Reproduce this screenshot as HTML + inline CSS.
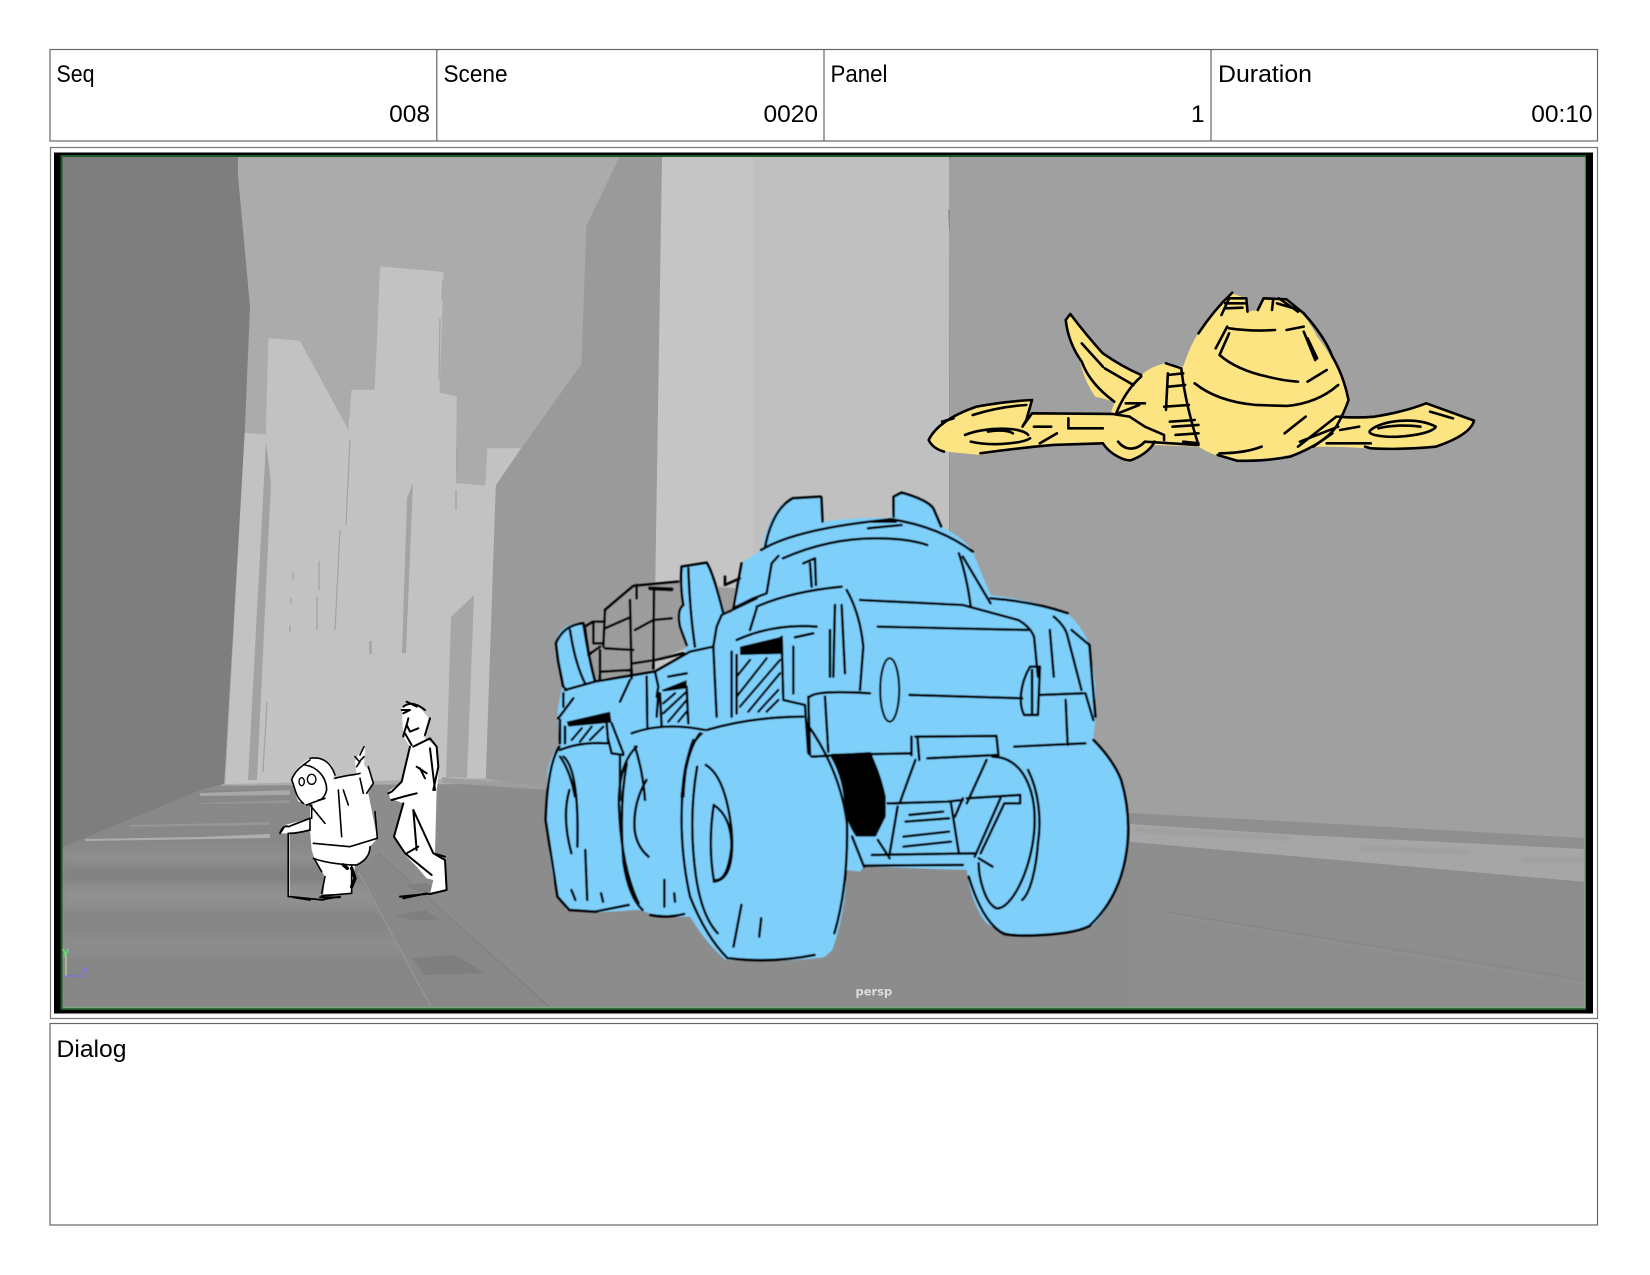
<!DOCTYPE html>
<html lang="en"><head><meta charset="utf-8"><title>Storyboard panel</title>
<style>
html,body{margin:0;padding:0;background:#fff;width:1650px;height:1275px;overflow:hidden}
svg{display:block;position:absolute;left:0;top:0}
.l{font-family:"Liberation Sans","Noto Sans CJK JP",sans-serif;font-size:24.5px;fill:#000}
.ink path{fill:none;stroke:#000;stroke-linecap:round;stroke-linejoin:round;vector-effect:non-scaling-stroke}
.th path{stroke-width:2.6}
</style></head><body>
<svg width="1650" height="1275" viewBox="0 0 1650 1275" xmlns="http://www.w3.org/2000/svg">
<defs>
<filter id="b2" x="-20%" y="-20%" width="140%" height="140%"><feGaussianBlur stdDeviation="2"/></filter>
<filter id="b5" x="-20%" y="-80%" width="140%" height="260%"><feGaussianBlur stdDeviation="5"/></filter>
<filter id="s" x="-5%" y="-5%" width="110%" height="110%"><feGaussianBlur stdDeviation="0.4"/></filter>
<clipPath id="c"><rect x="62.5" y="157" width="1522" height="850"/></clipPath>
</defs>

<!-- header table -->
<rect x="50" y="49.5" width="1547.5" height="91.5" fill="#fff" stroke="#666" stroke-width="1.2"/>
<path d="M436.8 49.5V141M824 49.5V141M1211 49.5V141" stroke="#666" stroke-width="1.2" fill="none"/>
<text class="l" x="56.5" y="82" textLength="38" lengthAdjust="spacingAndGlyphs">Seq</text>
<text class="l" x="443.5" y="82" textLength="64" lengthAdjust="spacingAndGlyphs">Scene</text>
<text class="l" x="830.5" y="82" textLength="57" lengthAdjust="spacingAndGlyphs">Panel</text>
<text class="l" x="1218" y="82" textLength="94" lengthAdjust="spacingAndGlyphs">Duration</text>
<text class="l" x="430" y="122" text-anchor="end">008</text>
<text class="l" x="818" y="122" text-anchor="end">0020</text>
<text class="l" x="1204.5" y="122" text-anchor="end">1</text>
<text class="l" x="1592.5" y="122" text-anchor="end">00:10</text>

<!-- panel frame -->
<rect x="50.5" y="147.5" width="1547" height="871" fill="#fff" stroke="#777" stroke-width="1.2"/>
<rect x="54" y="152.5" width="1539" height="861" fill="#000"/>
<rect x="60.5" y="155" width="1525.5" height="855" fill="#1f5a25"/>

<g clip-path="url(#c)">
<rect x="62" y="157" width="1523" height="850" fill="#8c8c8c"/>
<!-- left-floor tones and sidewalk -->
<polygon points="62,845 200,790 360,790 360,873 430,1007 62,1007" fill="#888"/>
<g filter="url(#b5)">
<rect x="62" y="852" width="300" height="12" fill="#8f8f8f"/>
<rect x="62" y="868" width="320" height="14" fill="#808080"/>
<rect x="62" y="885" width="340" height="22" fill="#919191"/>
<rect x="62" y="912" width="350" height="20" fill="#858585"/>
<rect x="62" y="935" width="370" height="18" fill="#8d8d8d"/>
<rect x="62" y="958" width="400" height="50" fill="#868686"/>
</g>
<polygon points="357,873 377,853 550,1007 430,1007" fill="#888"/>
<polygon points="358,873 360,873 432,1007 430,1007" fill="#939393"/>
<polygon points="405,885 425,883 445,892 418,892" fill="#808080"/>
<polygon points="395,915 425,910 440,920 410,920" fill="#7f7f7f"/>
<polygon points="412,958 455,955 485,973 425,975" fill="#7e7e7e"/>
<polygon points="377,853 379,853 551,1007 548,1007" fill="#828282"/>
<polygon points="85,839 200,837 270,834 270,838 85,841" fill="#aeaeae"/>
<polygon points="130,825 270,822 270,825 130,827" fill="#969696"/>
<polygon points="200,793 290,790 290,795 200,796" fill="#a8a8a8"/>
<polygon points="225,780 247,780 247,784 225,784" fill="#a3a3a3"/>
<polygon points="200,803 290,800 290,803 200,804" fill="#959595"/>

<g transform="translate(0 140) scale(.5263 .574)">
<!-- back wall -->
<polygon points="450,30 1190,30 1190,1120 420,1125" fill="#ababab"/>
<!-- left wall -->
<polygon points="110,20 452,20 452,60 475,290 465,510 426,1122 382,1132 118,1232" fill="#7e7e7e"/>
<!-- building on the right of the alley -->
<polygon points="1182,20 1262,20 1250,1130 1020,1130 920,1112 942,600 1105,390 1114,150" fill="#9a9a9a"/>
<!-- light towers -->
<polygon points="510,345 570,350 662,505 668,435 712,435 722,220 843,230 835,440 868,447 866,598 922,602 926,537 990,537 942,602 923,1112 428,1122 465,510 505,513" fill="#c2c2c2"/>
<polygon points="840,1110 1040,1125 1040,1132 840,1120" fill="#9e9e9e"/>
</g>
<polygon points="266,442 271,483 257,780 248,780" fill="#a2a2a2"/>
<polygon points="451,617 474,595 467,778 446,777" fill="#a6a6a6"/>
<polygon points="407,498 413,483 406,653 402,653" fill="#a4a4a4"/>
<polygon points="369,641 372,641 372,654 369,654" fill="#a8a8a8"/>
<path d="M319 561V590M317 597V630M293 572V580M291 598V604M290 625V632M340 530L335 630M350 440L346 525M267 702L263 772M441 150V150M443 280L442 300M440 318L439 380M457 447V470M456 490V510" stroke="#a2a2a2" stroke-width="1.2" fill="none"/>

<!-- big light building + right wall -->
<polygon points="662,157 949,157 949,740 655,740 655,600" fill="#c5c5c5"/>
<rect x="753" y="157" width="196" height="420" fill="#c0c0c0"/>
<polygon points="949,160 953,157 1590,157 1590,845 1130,830 950,820" fill="#a0a0a0"/>
<polygon points="948,210 950,210 950,230 949,230" fill="#8e8e8e"/>
<polygon points="1130,813 1585,838 1585,882 1130,842" fill="#a6a6a6"/>
<polygon points="1130,813 1300,822 1585,838 1585,849 1300,835 1130,824" fill="#8f8f8f"/>
<path d="M1135 830L1290 838M1360 848L1470 852M1520 860L1585 860" stroke="#8e8e8e" stroke-width="1.5" fill="none" filter="url(#b2)"/>
<polygon points="1130,842 1585,882 1585,1010 1130,1010" fill="#8d8d8d"/>
<path d="M1165,912L1585,980" stroke="#868686" stroke-width="1.2" fill="none"/>
<path d="M1165,914L1585,984" stroke="#939393" stroke-width="1" fill="none"/>
</g>
<path d="M62.5 1007.5H1584.7V157" fill="none" stroke="#7fa582" stroke-width="1.6"/>
<!-- axis -->
<path d="M66 955V976" stroke="#b7d6a8" stroke-width="1.2" fill="none"/>
<path d="M66 976H84" stroke="#7b74d8" stroke-width="1.4" fill="none"/>
<text x="62" y="955" font-family="'DejaVu Sans',sans-serif" font-size="11" font-weight="bold" fill="#6fd86f">y</text>
<text x="82" y="973" font-family="'DejaVu Sans',sans-serif" font-size="10" font-weight="bold" fill="#7f78e0">z</text>
<text x="855.5" y="995.5" font-family="'DejaVu Sans',sans-serif" font-size="11.5" font-weight="bold" fill="#dcdcdc">persp</text>

<!-- TRUCK -->
<g filter="url(#s)">
<g transform="translate(520 470) scale(.3954 .3333)">
<path fill="#7fcffb" d="M90 520Q95 470 145 458Q165 500 190 632L330 610L425 562Q395 500 405 430L410 290L470 278Q500 340 520 430L545 410L560 280L610 240Q625 150 665 100Q700 75 760 78L765 155Q850 140 940 145L945 75L965 65Q1030 90 1045 115L1065 170Q1130 210 1145 245L1190 375Q1300 390 1385 430Q1430 480 1440 530L1455 640V750L1450 810Q1500 870 1520 930Q1550 1050 1530 1170Q1510 1290 1450 1365Q1400 1395 1300 1398Q1230 1400 1180 1360Q1140 1300 1130 1200L870 1190L860 1205L825 1200Q825 1320 790 1440L770 1462Q650 1480 520 1470Q470 1420 430 1340L360 1342L300 1320L190 1328L120 1320Q90 1280 80 1200Q60 1050 70 900Q80 850 100 830L95 720L105 660L115 620Z"/>
<path d="M785 860L890 855Q915 920 925 980L925 1040L900 1100L850 1100Q825 1060 820 1000Q815 920 785 860Z" fill="#000"/>
<g class="ink th">
<!-- top / cab -->
<path d="M620 230C630 170 650 110 690 85L760 80M762 82L765 155M610 240Q700 175 940 148Q1060 170 1145 245M945 140L945 80L965 68Q1030 90 1045 115L1065 170M665 265Q780 205 900 205Q980 205 1030 225M880 175L965 165M890 155L950 155M1110 250Q1130 320 1140 410M1120 260Q1160 340 1190 400"/>
<!-- grille and front -->
<path d="M860 390L1120 405L1260 450Q1290 470 1300 500L1310 620M1190 385Q1300 395 1385 430M905 470L1285 480M1350 440Q1380 470 1385 500L1420 660M1395 480L1440 525L1455 740M1340 480L1350 620"/>
<path d="M985 675L1270 685M1315 675L1425 670M990 850L790 855M1380 690L1385 825M1430 670L1450 750M1000 800L1205 798L1210 855L1030 865M1005 800L1010 870M1250 830L1430 820M990 800V855"/>
<ellipse cx="935" cy="660" rx="24" ry="95" fill="none" stroke="#000" style="stroke-width:2.2;vector-effect:non-scaling-stroke"/>
<path d="M1290 590C1265 640 1260 700 1275 735L1310 735L1315 590ZM1295 600V730"/>
<!-- front wheel -->
<path d="M725 760Q810 900 827 1060Q830 1250 795 1390M460 790Q420 830 412 950Q400 1120 430 1280Q470 1400 525 1465M530 1465Q640 1480 745 1455M448 890Q425 1050 445 1220Q460 1340 500 1390M470 885Q520 920 535 1080Q545 1230 490 1235M490 1005Q535 1040 535 1130Q525 1240 490 1230Q475 1120 490 1005M560 1305L540 1430M610 1345L605 1400"/>
<!-- mid wheel -->
<path d="M295 830Q250 880 250 1000Q255 1190 300 1300M270 880Q250 1010 262 1180Q275 1280 310 1320M320 930Q285 1000 290 1080Q295 1130 325 1160M330 1335Q370 1345 415 1332M365 1230V1310M390 1270L392 1295"/>
<!-- rear wheel -->
<path d="M100 830Q70 880 65 1050L95 1280L125 1320L190 1325L275 1305M110 860Q150 900 145 1130M125 960Q105 1040 130 1150M165 1140L170 1290M130 1260L140 1290M205 1270L210 1295"/>
<!-- undercarriage -->
<path d="M1000 870L960 1000L930 1000M1180 870L1130 1000M840 1100L870 1190M905 1110L935 1165M890 1155L1150 1150M870 1187L1120 1185M940 1000L1080 995L1120 990M955 1010L935 1150M1090 1000L1110 1150M985 1035L1070 1025M975 1055L1085 1045M970 1100L1085 1085M970 1130L1090 1115M1120 985L1100 1040M1130 985L1265 975L1265 1000L1225 1000L1165 1150M1215 985L1150 1160M1160 1165L1195 1190"/>
<path d="M1450 810Q1500 870 1520 930Q1550 1050 1530 1170Q1510 1290 1440 1368Q1400 1392 1300 1396Q1250 1398 1225 1392Q1170 1360 1135 1220M1195 860C1270 860 1310 960 1300 1090C1290 1210 1240 1320 1205 1315C1175 1300 1160 1220 1160 1180M1285 900C1310 960 1320 1040 1310 1120M1310 1120C1305 1200 1290 1270 1270 1290"/>
</g>
</g>
<g transform="translate(540 530) scale(.3333)">
<path fill="#9d9d9d" d="M135 290L195 240L285 165L420 155L445 350L350 395L180 450Z"/>
<path fill="#9d9d9d" d="M530 170L590 175L575 250L550 250Z"/>
<path fill="#7fcffb" d="M48 340Q70 285 130 280Q145 380 165 455L75 480L55 390Z"/>
<path fill="#7fcffb" d="M425 110L500 98Q520 130 550 250L530 290L520 350L440 345L420 290Q410 240 430 225Q420 170 425 110Z"/>
<path fill="#7fcffb" d="M75 480L165 455L345 425L450 365L520 340L580 240L600 300L600 600L60 640L60 560Z"/>
<path d="M600 350L725 320V372L600 375ZM365 480L440 450V475L370 485ZM80 575L210 545L215 578L85 590Z" fill="#000"/>
<g class="ink th">
<path d="M195 240L280 168L415 155M290 165V205M195 240L190 350M270 210L275 445M342 175L340 415M195 295L270 262M285 300L340 270L395 265M195 355L280 360M280 400L345 390L430 370M180 360V450M135 290L160 275L190 275M160 275V340L190 340M145 375L180 350M185 425L270 420M135 290L145 370"/>
<path d="M330 175L395 178" style="stroke-width:4"/>
<path d="M48 340Q70 285 130 280Q145 380 165 455M90 300Q105 400 135 460M48 340L55 395L70 470L80 480M75 480L165 455L345 425L450 365L520 350M70 490V530M55 565L100 505M60 570V640"/>
<path d="M425 110L500 98Q520 130 550 250M425 110Q420 170 430 225Q410 240 420 290L440 345M445 115Q450 250 465 350M555 140V165L600 145"/>
<path d="M580 235L640 205L680 190L695 100L715 78M605 100L580 235M650 235L630 300M650 230Q750 185 905 170M790 100L825 85L828 165M810 100L815 170M590 330Q700 280 830 290M765 322L820 310M530 290L545 255L650 205M530 290L520 350L530 560M575 365V560"/>
<path d="M725 320L730 510L795 525L805 670M590 375L590 550M760 350V490M360 490L365 590M355 490L350 560M440 470L445 580M385 440L440 430M320 440L322 590M240 515L270 450M345 425L355 470L350 500"/>
<path d="M75 590V640M200 580L205 640M205 630L215 670L250 675M215 580L250 670M60 660Q120 635 200 640M275 610Q370 575 495 600M500 600Q640 560 790 560M810 500Q830 480 990 490M805 500L810 675M855 500L865 665M815 680L990 670"/>
<path d="M885 225L880 440M905 225L915 430M920 180Q960 250 970 350L960 480M870 300V440M480 610Q440 660 425 800M460 630Q435 690 430 800M285 650Q310 730 315 810M240 680V810M60 680Q90 720 105 800"/>
<path d="M590 440L630 390M590 500L680 385M600 530L720 390M625 545L720 430M655 545L715 480M680 545L715 510M370 520L405 490M370 550L440 485M385 575L440 510M415 575L440 545M95 630L125 595M120 635L155 590M150 630L190 590" style="stroke-width:2.4"/>
</g>
</g>
</g>

<!-- SPACESHIP -->
<g transform="translate(900 270) scale(.3827 .3333)" filter="url(#s)">
<path fill="#fde482" d="M780 190Q820 120 862 68L905 85L910 125L935 120L948 85L1010 88Q1060 130 1090 200Q1150 290 1172 385Q1165 420 1145 440Q1190 445 1240 440Q1320 425 1380 400Q1450 425 1500 455Q1490 495 1400 530Q1300 540 1220 535Q1150 530 1090 530Q1000 570 880 572Q820 560 780 530L665 525Q640 560 595 575Q555 560 530 520L400 525Q300 540 210 555L120 545Q70 525 75 500Q100 450 200 410Q270 395 348 388L332 430L550 430L562 395L510 380Q480 330 470 270Q435 200 433 150L445 132Q490 200 530 250Q580 290 630 315Q655 290 690 280L740 290Q760 220 780 190Z"/>
<g class="ink th">
<path d="M780 190Q820 120 868 68M840 135L860 85L905 85L908 125M850 100L900 100M850 115L895 113M935 120L950 85L1010 88L1055 130M975 90L972 120M985 100L1030 115M990 85L1040 125"/>
<path d="M860 175Q920 185 980 180M1010 180L1055 170M855 170L825 235M860 190L835 255M1055 185L1085 270M1065 205L1090 265M835 255Q880 300 960 320Q1000 332 1040 335M1065 335L1115 300"/>
<path d="M1055 130Q1110 200 1130 260Q1160 320 1172 390Q1160 430 1140 470Q1110 520 1020 560Q950 575 880 572L830 555M835 550Q900 550 945 530M1005 490L1060 440M1040 530L1140 440M1045 515L1145 470M1080 530L1130 490M770 340Q830 395 930 405L1010 408Q1090 400 1145 345"/>
<path d="M735 295Q745 400 780 525M695 280L735 295M700 310L695 420M700 315L740 310M702 350L745 345M690 410L755 405M705 455L770 450M712 470L780 465M720 495L780 490M740 515L780 520M630 320Q590 360 565 430M590 400L640 400M570 430L625 405M600 440L640 470L690 495L690 510"/>
<path d="M433 150L445 132Q490 200 530 250Q580 290 630 315M433 150Q440 220 475 275Q495 340 560 395M475 220L530 290M535 295L610 345"/>
<path d="M345 390Q270 395 200 410Q100 450 75 510Q85 535 115 545M110 455L140 445M190 435Q260 410 330 405M345 390L330 450L320 470L345 430L555 432L600 440M440 445V475H530M350 470H395M365 520L410 490M530 520L400 525Q300 535 210 550M170 495C220 470 320 470 335 495M185 515C240 530 320 520 340 505M230 485C250 480 280 480 295 490"/>
<path d="M530 520C550 555 590 575 605 570C640 555 660 530 665 515M570 515C590 545 620 540 640 515M640 515L775 525M1145 440Q1190 445 1240 440Q1320 425 1375 400L1500 452Q1490 495 1400 530Q1300 540 1230 535L1215 530M1150 480L1200 470M1230 480C1260 450 1350 440 1400 470C1395 490 1300 510 1240 495C1225 490 1225 485 1230 480M1250 475C1280 465 1330 465 1360 470M1385 425L1445 445M1115 520L1230 520"/>
</g>
</g>

<!-- CHARACTERS -->
<g transform="translate(260 690) scale(.3333)" filter="url(#s)">
<path fill="#fff" d="M95 270Q110 225 150 205Q190 198 215 225Q228 250 218 270Q260 255 290 255L285 215L298 190L315 170L312 225Q345 260 338 280L325 310L352 445L330 470Q330 500 285 525L275 612L190 612L195 560L165 510L155 480L150 420L100 430L60 430L75 405L150 385L150 345L115 335Q105 310 95 270Z"/>
<path fill="#fff" d="M425 50L470 40L510 90L490 140L530 170Q540 240 530 300L525 490L555 510L560 600L510 612L520 570L500 565L470 530L430 490L402 440L430 340L390 325L385 305L430 270L450 170L430 140Z"/>
<rect x="83" y="430" width="7" height="190" fill="#fff"/>
<g class="ink" style="--w:1">
<path style="stroke-width:1.6" d="M150 205C180 200 210 210 225 255M95 270C105 240 130 225 150 210M95 270C105 290 105 320 130 340M140 345C150 340 180 330 195 325M135 225C170 230 200 260 200 300C195 320 185 330 175 330M150 345L195 400M155 385V345M150 420V385"/>
<ellipse cx="155" cy="268" rx="13" ry="15" fill="none" stroke="#000" stroke-width="1.4" vector-effect="non-scaling-stroke"/>
<ellipse cx="125" cy="275" rx="8" ry="12" fill="none" stroke="#000" stroke-width="1.4" vector-effect="non-scaling-stroke"/>
<path style="stroke-width:1.6" d="M225 265C260 255 285 255 300 250M300 215L290 230M312 170L300 195M285 200L298 215L312 200M325 230L340 280L320 310M300 265L310 310M250 300L265 345M235 300L245 440M345 365L352 445L270 470L160 460M160 505C200 520 260 525 290 525C315 515 330 495 330 470M165 510L185 545M195 560L185 610M275 525L275 610L185 618"/>
<path style="stroke-width:1.8" d="M60 430C65 415 75 405 85 410L150 385M60 430L70 415M90 430C110 430 130 425 150 420M85 430L85 620M90 620L190 630M100 622L150 630M180 622H240M190 628L240 620"/>
<path style="stroke-width:2" d="M430 50C450 35 470 40 495 60M440 35L470 50M425 60L450 60L430 70M510 85L495 135M445 85C440 110 430 130 430 140M440 105L450 125L475 115M435 130L455 165M460 170L510 145L530 170L535 230L520 300M450 170L425 275L395 305L385 310M395 330L430 320L470 310M470 230L500 250M480 235L495 265M510 175L525 300M460 360L520 490L555 510L560 600L510 612M430 340L402 440L435 490L515 555M440 490L475 470M460 360L470 480M520 490L555 500M420 620L520 610M430 625L500 610"/>
<path d="M275 535L285 565L275 590" style="stroke-width:3.4"/>
<path d="M250 525L262 535" style="stroke-width:3.4"/>
</g>
</g>

<!-- dialog -->
<rect x="50" y="1023.5" width="1547.5" height="201.5" fill="#fff" stroke="#666" stroke-width="1.2"/>
<text class="l" x="56.5" y="1057" textLength="70" lengthAdjust="spacingAndGlyphs">Dialog</text>
</svg>
</body></html>
